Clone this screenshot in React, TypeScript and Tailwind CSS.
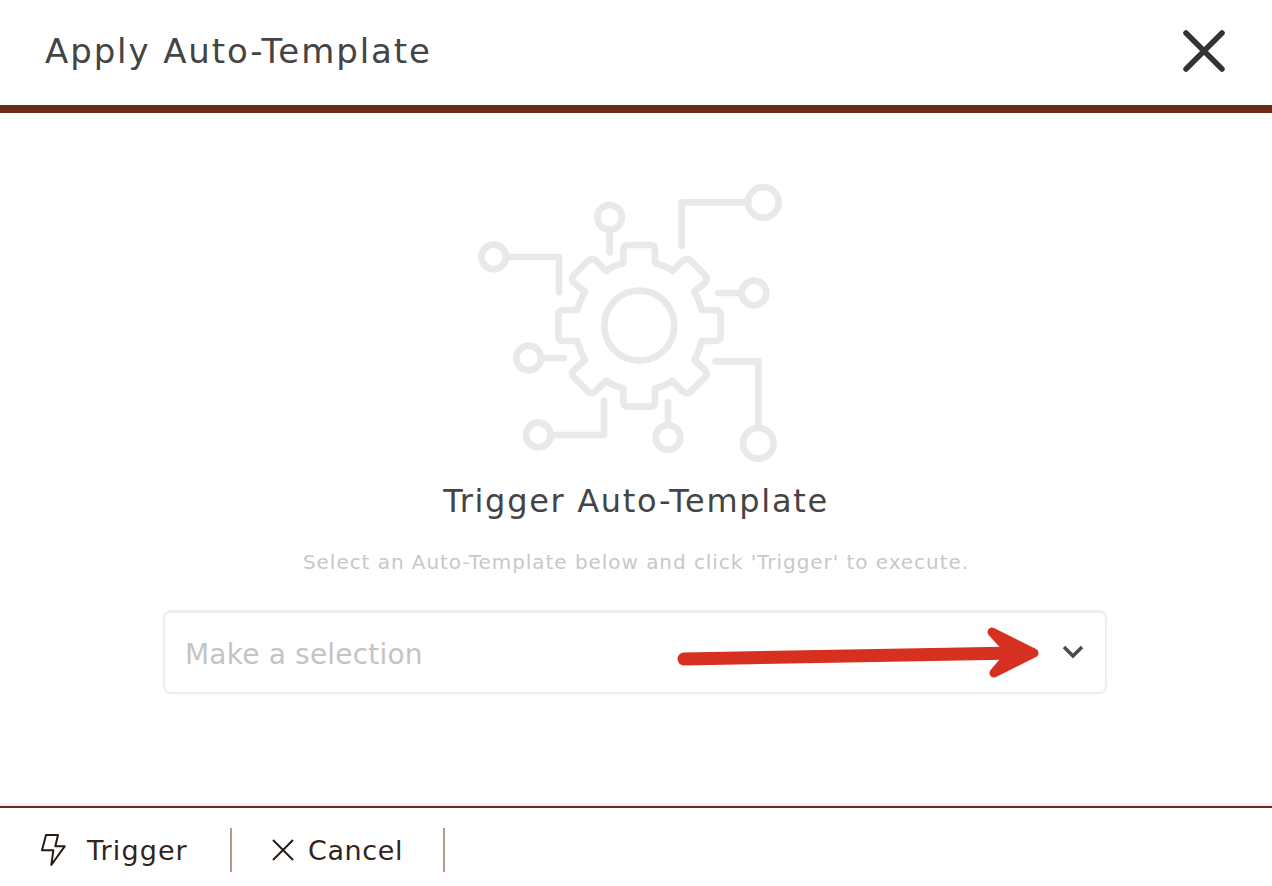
const font = "font-['DejaVu_Sans','Liberation_Sans',sans-serif]";

function GearIcon() {
  return (
    <svg width="340" height="300" viewBox="0 0 1020 900" fill="none" stroke="#e9e9e9" strokeWidth="20" strokeLinecap="round" strokeLinejoin="round">
      <path d="M490 280V240Q490 225 505 225H570Q585 225 585 240V280Q615 287 638 303L665 275Q680 262 692 272L735 315Q745 325 735 338L703 365Q718 390 725 420H765Q782 420 782 437V497Q782 513 765 513H725Q718 543 703 570L735 600Q745 612 735 622L692 665Q680 675 665 662L638 632Q615 648 585 655V695Q585 710 570 710H505Q490 710 490 695V655Q460 648 438 632L408 662Q398 675 385 665L342 622Q332 612 342 600L375 570Q360 543 352 513H312Q295 513 295 497V437Q295 420 312 420H352Q360 390 375 365L342 338Q332 325 342 315L385 272Q398 262 408 272L438 303Q460 287 490 280Z" />
      <circle cx="538" cy="467" r="105" />
      <circle cx="449" cy="142" r="37" />
      <path d="M449 185V247" />
      <circle cx="910" cy="97" r="46" />
      <path d="M665 227V97H865" />
      <circle cx="101" cy="261" r="37" />
      <path d="M145 261H297V367" />
      <circle cx="882" cy="369" r="37" />
      <path d="M775 369H838" />
      <circle cx="206" cy="564" r="37" />
      <path d="M250 564H312" />
      <circle cx="235" cy="795" r="37" />
      <path d="M280 795H432V692" />
      <circle cx="624" cy="802" r="37" />
      <path d="M624 757V697" />
      <circle cx="895" cy="820" r="46" />
      <path d="M767 574H895V772" />
    </svg>
  );
}

function RedArrow() {
  return (
    <svg className="absolute left-[504px] top-[5px]" width="380" height="70" viewBox="0 0 380 70" fill="none" stroke="#d63020" strokeLinecap="round" strokeLinejoin="round">
      <path d="M15 41L350 35" strokeWidth="13" />
      <path d="M323 14L365 35L325 55L342 35Z" strokeWidth="9" fill="#d63020" />
    </svg>
  );
}

export default function App() {
  return (
    <div className={`flex h-[886px] w-full flex-col overflow-hidden bg-white ${font}`}>
      <header className="flex h-[113px] shrink-0 items-start justify-between border-b-[8px] border-[#6b2c1c] pl-[45px] pr-[47px]">
        <h1 className="mt-[28px] text-[34px] font-normal leading-[46px] tracking-[1.9px] text-[#444444]">
          Apply Auto-Template
        </h1>
        <svg className="mt-[30px]" width="42" height="42" viewBox="0 0 42 42" fill="none" stroke="#333333" strokeWidth="5.5" strokeLinecap="round">
          <path d="M3 3L39 39M39 3L3 39" />
        </svg>
      </header>

      <main className="flex flex-1 flex-col items-center">
        <div className="mr-[13px] mt-[57px] h-[300px]">
          <GearIcon />
        </div>
        <h2 className="mt-[9px] text-[32px] font-normal leading-[44px] tracking-[1.7px] text-[#444444]">
          Trigger Auto-Template
        </h2>
        <p className="mt-[24px] text-[20px] font-normal leading-[30px] tracking-[0.95px] text-[#c8c8c8]">
          Select an Auto-Template below and click 'Trigger' to execute.
        </p>
        <div className="relative ml-[-2px] mt-[33px] flex h-[84px] w-[944px] items-center justify-between rounded-[8px] border-[2px] border-t-[3px] border-[#eeeeee] pl-[20px] pr-[20px]">
          <span className="mt-[5px] text-[28px] font-normal tracking-[0.2px] text-[#c4c4c4]">Make a selection</span>
          <svg width="24" height="24" viewBox="0 0 24 24" fill="none" stroke="#4a4a4a" strokeWidth="3.5" className="mt-[-2px]">
            <path d="M3 7L12 16L21 7" />
          </svg>
          <RedArrow />
        </div>
      </main>

      <footer className="flex h-[80px] shrink-0 items-center border-t-[2px] border-[#6b2c1c] pl-[40px] pt-[6px] shadow-[0_-2px_3px_rgba(0,0,0,0.08)]">
        <button type="button" className="flex h-[44px] w-[192px] items-center border-r-[2px] border-[#b8968e] text-[27px] font-normal tracking-[1.1px] text-[#33231d]">
          <svg width="28" height="34" viewBox="0 0 84 102" fill="none" stroke="#2a1a14" strokeWidth="6" strokeLinejoin="round" strokeLinecap="round">
            <path d="M18 6H54L46 40H74L34 96L40 52H6Z" />
          </svg>
          <span className="ml-[19px] mt-[2px]">Trigger</span>
        </button>
        <button type="button" className="flex h-[44px] w-[213px] items-center border-r-[2px] border-[#b8968e] pl-[40px] text-[27px] font-normal tracking-[0.6px] text-[#33231d]">
          <svg width="22" height="22" viewBox="0 0 22 22" fill="none" stroke="#2a1a14" strokeWidth="2">
            <path d="M1 1L21 21M21 1L1 21" />
          </svg>
          <span className="ml-[14px] mt-[2px]">Cancel</span>
        </button>
      </footer>
    </div>
  );
}
